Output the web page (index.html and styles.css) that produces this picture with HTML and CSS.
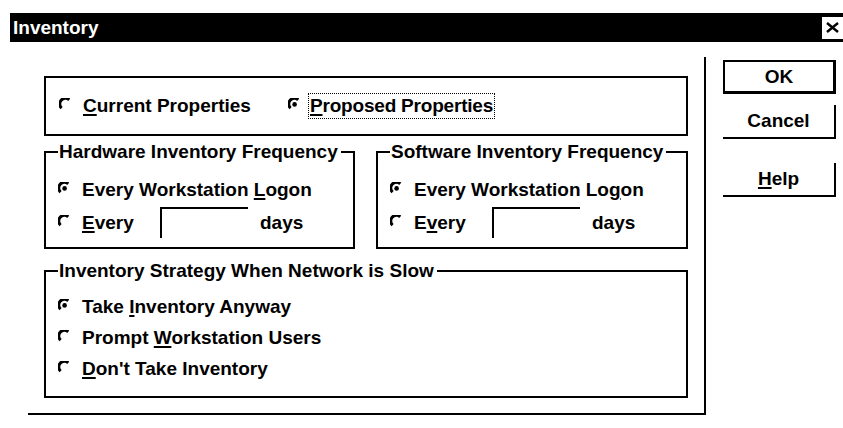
FILE: index.html
```html
<!DOCTYPE html>
<html lang="en">
<head>
  <meta charset="UTF-8">
  <title>Inventory</title>
  <link rel="stylesheet" href="styles.css">
</head>
<body>
  <div class="titlebar">
    <span class="title">Inventory</span>
    <span class="close">
      <svg width="13" height="11" viewBox="0 0 13 11"><path d="M1 1 L12 10 M12 1 L1 10" stroke="#000" stroke-width="2.4" fill="none"/></svg>
    </span>
  </div>

  <div class="dialog">
    <div class="frame">
      <div class="props">
        <label class="opt opt-current">
          <svg class="radio" width="12" height="12" viewBox="0 0 12 12"><path d="M2.6 10.2 A5 5 0 0 1 10.2 1.8" stroke="#000" stroke-width="3" fill="none"/></svg>
          <span><u>C</u>urrent Properties</span>
        </label>
        <label class="opt">
          <svg class="radio radio-focus" width="12" height="12" viewBox="0 0 12 12"><path d="M2.6 10.2 A5 5 0 0 1 10.2 1.8" stroke="#000" stroke-width="3" fill="none"/><circle cx="6.6" cy="6.4" r="2.3" fill="#000"/></svg>
          <span class="focus"><u>P</u>roposed Properties</span>
        </label>
      </div>

      <div class="freq-row">
        <fieldset class="group group-hw">
          <legend>Hardware Inventory Frequency</legend>
          <label class="opt line">
            <svg class="radio" width="12" height="12" viewBox="0 0 12 12"><path d="M2.6 10.2 A5 5 0 0 1 10.2 1.8" stroke="#000" stroke-width="3" fill="none"/><circle cx="6.6" cy="6.4" r="2.3" fill="#000"/></svg>
            <span>Every Workstation <u>L</u>ogon</span>
          </label>
          <div class="opt days-line">
            <label class="every">
              <svg class="radio" width="12" height="12" viewBox="0 0 12 12"><path d="M2.6 10.2 A5 5 0 0 1 10.2 1.8" stroke="#000" stroke-width="3" fill="none"/></svg>
              <span><u>E</u>very</span>
            </label>
            <span class="edit"></span>
            <span class="days">days</span>
          </div>
        </fieldset>

        <fieldset class="group group-sw">
          <legend>Software Inventory Frequency</legend>
          <label class="opt line">
            <svg class="radio" width="12" height="12" viewBox="0 0 12 12"><path d="M2.6 10.2 A5 5 0 0 1 10.2 1.8" stroke="#000" stroke-width="3" fill="none"/><circle cx="6.6" cy="6.4" r="2.3" fill="#000"/></svg>
            <span>Every Workstation Lo<u>g</u>on</span>
          </label>
          <div class="opt days-line">
            <label class="every">
              <svg class="radio" width="12" height="12" viewBox="0 0 12 12"><path d="M2.6 10.2 A5 5 0 0 1 10.2 1.8" stroke="#000" stroke-width="3" fill="none"/></svg>
              <span>E<u>v</u>ery</span>
            </label>
            <span class="edit"></span>
            <span class="days">days</span>
          </div>
        </fieldset>
      </div>

      <fieldset class="group group-slow">
        <legend>Inventory Strategy When Network is Slow</legend>
        <label class="opt slow-line">
          <svg class="radio" width="12" height="12" viewBox="0 0 12 12"><path d="M2.6 10.2 A5 5 0 0 1 10.2 1.8" stroke="#000" stroke-width="3" fill="none"/><circle cx="6.6" cy="6.4" r="2.3" fill="#000"/></svg>
          <span>Take <u>I</u>nventory Anyway</span>
        </label>
        <label class="opt slow-line">
          <svg class="radio" width="12" height="12" viewBox="0 0 12 12"><path d="M2.6 10.2 A5 5 0 0 1 10.2 1.8" stroke="#000" stroke-width="3" fill="none"/></svg>
          <span>Prompt <u>W</u>orkstation Users</span>
        </label>
        <label class="opt slow-line">
          <svg class="radio" width="12" height="12" viewBox="0 0 12 12"><path d="M2.6 10.2 A5 5 0 0 1 10.2 1.8" stroke="#000" stroke-width="3" fill="none"/></svg>
          <span><u>D</u>on't Take Inventory</span>
        </label>
      </fieldset>
    </div>

    <div class="buttons">
      <button class="btn btn-default">OK</button>
      <button class="btn">Cancel</button>
      <button class="btn btn-help"><u>H</u>elp</button>
    </div>
  </div>
</body>
</html>
```

FILE: styles.css
```css
body {
  margin: 0;
  background: #ffffff;
  color: #000000;
  font-family: "Liberation Sans", Arial, sans-serif;
  font-size: 19px;
  font-weight: bold;
}
u {
  text-decoration-thickness: 2px;
  text-underline-offset: 2px;
}

.titlebar {
  margin: 13px 0 0 10px;
  height: 29px;
  background: #000000;
  color: #ffffff;
  display: flex;
  align-items: center;
  justify-content: space-between;
  padding-left: 3px;
}
.close {
  width: 21px;
  height: 22px;
  background: #ffffff;
  display: flex;
  align-items: center;
  justify-content: center;
}

.dialog {
  display: flex;
  margin-left: 28px;
}
.frame {
  width: 678px;
  margin-top: 15px;
  padding: 19px 16px 15px 16px;
  box-sizing: border-box;
  border-right: 2px solid #000;
  border-bottom: 2px solid #000;
}

.props {
  height: 60px;
  box-sizing: border-box;
  border: 2px solid #000;
  display: flex;
  align-items: center;
  padding-left: 13px;
}
.opt {
  display: flex;
  align-items: center;
  line-height: 24px;
}
.opt-current {
  width: 229px;
}
.radio {
  flex: none;
  width: 12px;
  height: 12px;
  margin: 0 12px 4px 0;
}
.radio-focus {
  margin-right: 8px;
}
.focus {
  border: 1px dotted #000;
  padding: 0 1px;
  letter-spacing: -0.2px;
}

.group {
  margin: 0;
  border: 2px solid #000;
  padding: 16px 12px 9px 12px;
  min-width: 0;
  box-sizing: border-box;
}
.group legend {
  padding: 0 3px 0 1px;
  line-height: 20px;
}

.freq-row {
  display: flex;
  gap: 21px;
  margin-top: 6px;
}
.group-hw {
  width: 311px;
}
.group-sw {
  width: 312px;
}
.days-line {
  margin-top: 5px;
  height: 31px;
}
.every {
  display: flex;
  align-items: center;
  width: 102px;
}
.edit {
  width: 88px;
  height: 31px;
  box-sizing: border-box;
  border-top: 2px solid #000;
  border-left: 2px solid #000;
}
.days {
  margin-left: 12px;
}

.group-slow {
  margin-top: 12px;
  padding: 10px 12px 12px 12px;
}
.slow-line {
  line-height: 31px;
}

.buttons {
  display: flex;
  flex-direction: column;
  margin: 18px 0 0 17px;
}
.btn {
  width: 113px;
  height: 34px;
  font: inherit;
  color: #000;
  background: #fff;
  border: none;
  border-right: 2px solid #000;
  border-bottom: 2px solid #000;
  padding: 0;
  margin-top: 11px;
}
.btn-default {
  margin-top: 0;
  border: 2px solid #000;
  border-right-width: 3px;
  border-bottom-width: 3px;
}
.btn-help {
  margin-top: 24px;
}
```
